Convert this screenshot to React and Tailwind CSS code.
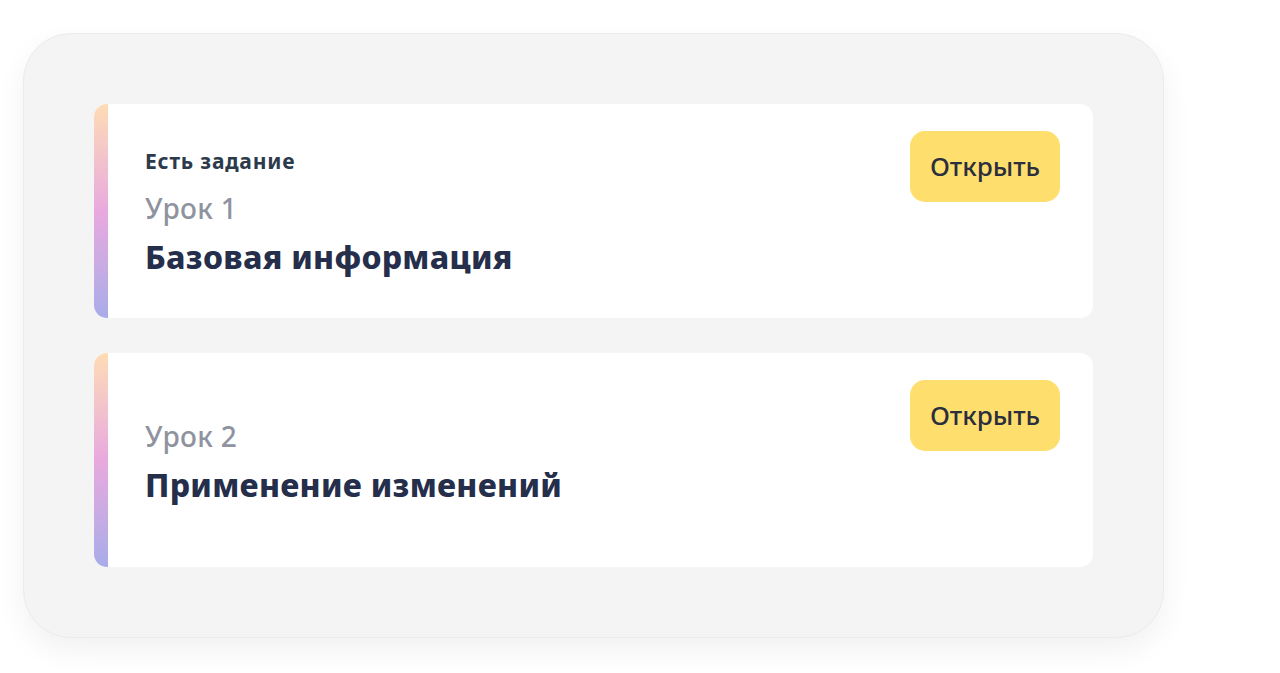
const lessons = [
  { id: 1, task: "Есть задание", title: "Базовая информация" },
  { id: 2, task: null, title: "Применение изменений" },
];

const LessonCard = ({ lesson }) => (
  <div className="flex h-[214px] rounded-[13px] bg-white overflow-hidden">
    <div className="w-[14px] shrink-0 bg-gradient-to-b from-[#fedcb4] via-[#e8a9de] to-[#a7ace9]" />
    <div className="flex flex-1 justify-between pl-[37px] pr-[33px] pt-[27px]">
      <div className="flex flex-col justify-center pb-[24px]">
        {lesson.task && (
          <div className="text-[21px] leading-[28px] font-bold tracking-[0.8px] text-[#2c3a4c] mb-[15px]">
            {lesson.task}
          </div>
        )}
        <div className="text-[28px] leading-[36px] font-medium tracking-[0.3px] text-[#8f93a0]">
          Урок {lesson.id}
        </div>
        <div className="text-[32px] leading-[42px] font-extrabold tracking-[0.3px] text-[#252e4a] mt-[10px]">
          {lesson.title}
        </div>
      </div>
      <button className="w-[150px] h-[71px] rounded-[15px] bg-[#fedf6e] text-[26px] font-medium text-[#2a2e3d]">
        Открыть
      </button>
    </div>
  </div>
);

export default function App() {
  return (
    <div
      className="min-h-[673px] bg-white pt-[33px] pl-[23px]"
      style={{ fontFamily: '"Noto Sans", sans-serif' }}
    >
      <div className="w-[1141px] rounded-[48px] bg-[#f4f4f4] border border-[#ebebeb] shadow-[0_12px_30px_rgba(0,0,0,0.06)] p-[70px] flex flex-col gap-[35px]">
        {lessons.map((l) => (
          <LessonCard key={l.id} lesson={l} />
        ))}
      </div>
    </div>
  );
}
